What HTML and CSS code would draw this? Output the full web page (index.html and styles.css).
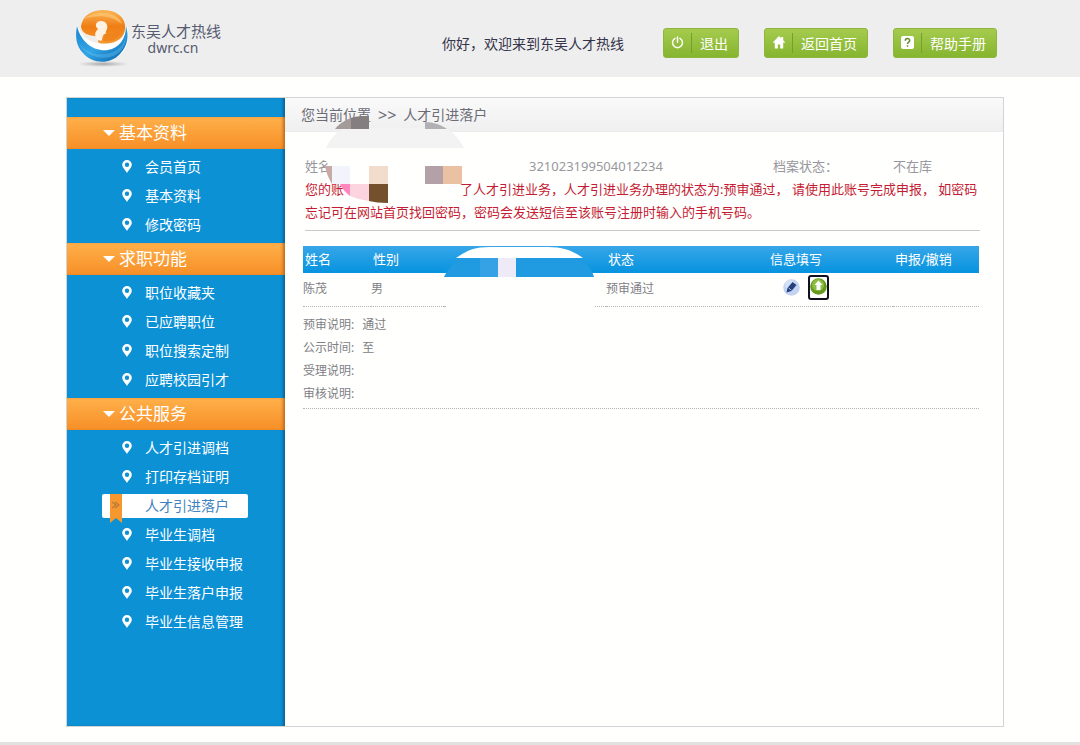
FILE: index.html
```html
<!DOCTYPE html>
<html lang="zh-CN">
<head>
<meta charset="utf-8">
<title>东吴人才热线</title>
<link rel="stylesheet" href="styles.css">
</head>
<body>
<svg class="defs" width="0" height="0" aria-hidden="true">
  <symbol id="pin" viewBox="0 0 10 13">
    <path fill="#fff" fill-rule="evenodd" d="M5 0a4.8 4.8 0 0 1 4.8 4.8C9.800 7.600 6.800 9.700 5 13 3.200 9.700.2 7.600.2 4.800A4.800 4.800 0 0 1 5 0Zm0 2.500a2.200 2.200 0 1 0 0 4.400 2.200 2.200 0 0 0 0-4.400Z"/>
  </symbol>
</svg>

<header class="header">
  <a class="logo" href="#">
    <svg class="logo-mark" width="56" height="58" viewBox="0 0 56 58" aria-hidden="true">
      <defs>
        <linearGradient id="lo" x1="0" y1="0" x2="0" y2="1"><stop offset="0" stop-color="#fbb659"/><stop offset=".5" stop-color="#ef7d14"/><stop offset="1" stop-color="#f59a33"/></linearGradient>
        <linearGradient id="lb" x1="0" y1="0" x2="1" y2="1"><stop offset="0" stop-color="#1d86cf"/><stop offset=".5" stop-color="#31a5e6"/><stop offset="1" stop-color="#0a5fa8"/></linearGradient>
        <radialGradient id="ls"><stop offset="0" stop-color="#888" stop-opacity=".7"/><stop offset="1" stop-color="#999" stop-opacity="0"/></radialGradient>
      </defs>
      <ellipse cx="28" cy="54" rx="26" ry="3" fill="url(#ls)"/>
      <path d="M2 15C0 24 2 32 6 39c9 13 31 16 42 3 6-8 6-17 4-27-1 9-7 17-17 18C20 36 8 30 2 15Z" fill="#fff"/>
      <path d="M2 16C0 26 1 36 8 43c9 11 27 12 37 1 8-8 9-19 6-28 0 13-7 22-18 24C20 42 6 33 2 16Z" fill="url(#lb)"/>
      <path d="M4 33c8 11 22 14 34 9 7-3 11-8 13-16 0 11-7 19-16 21C21 50 8 43 4 33Z" fill="#65c1f0" opacity=".4"/>
      <path d="M6 16C8 5 17 0 28 0c12 0 21 6 22 15 1 9-4 16-14 18-7 1-13 1-13-2 0-2 1-3 2-5C16 27 6 24 6 16Z" fill="url(#lo)"/>
      <path d="M9 9C20-1 43 1 47 14 38 6 23 4 9 9Z" fill="#fdc46f" opacity=".75"/>
      <path d="M22 29c-3-4-2-7 1-10-4-3-2-8 3-8 6 0 8 6 5 10 0 3-2 6-3 9-2 1-4 1-6-1Z" fill="#fff2e3"/>
      <path d="M29 24c9 1 16-4 17-11 3 9-3 17-11 18-4 1-6 0-8-1 0-3 1-4 2-6Z" fill="#f0831c" opacity=".9"/>
    </svg>
    <span class="logo-text"><span>东吴人才热线</span><span class="logo-domain">dwrc.cn</span></span>
  </a>
  <nav class="tools">
    <span class="welcome">你好，欢迎来到东吴人才热线</span>
    <button class="tool" type="button">
      <span class="tool-icon"><svg width="13" height="13" viewBox="0 0 13 13" fill="none" stroke="#fff" stroke-width="1.500" stroke-linecap="round"><path d="M4 2.300a5 5 0 1 0 5 0M6.500 1v5.200"/></svg></span>
      <span class="tool-label">退出</span>
    </button>
    <a class="tool" href="#">
      <span class="tool-icon"><svg width="12" height="13" viewBox="0 0 12 13" fill="#fff"><path d="M6 0l2.200 2.200V1h2v3.200L12 6.200l-.8.900-1-.8V12.500H7.200V8.500H4.800v4H1.800V6.300l-1 .8L0 6.200Z"/></svg></span>
      <span class="tool-label">返回首页</span>
    </a>
    <a class="tool" href="#">
      <span class="tool-icon"><svg width="13" height="13" viewBox="0 0 13 13"><rect width="13" height="13" rx="2" fill="#fff"/><path d="M4.300 4.700C4.300 1.800 8.700 1.800 8.700 4.500 8.700 6.200 6.500 6 6.500 8M6.500 9.300v1.500" fill="none" stroke="#648b26" stroke-width="1.500"/></svg></span>
      <span class="tool-label">帮助手册</span>
    </a>
  </nav>
</header>

<div class="shell">
  <nav class="sidebar">
    <h2 class="group">基本资料</h2>
    <ul class="menu">
      <li><a href="#"><svg class="pin"><use href="#pin"/></svg>会员首页</a></li>
      <li><a href="#"><svg class="pin"><use href="#pin"/></svg>基本资料</a></li>
      <li><a href="#"><svg class="pin"><use href="#pin"/></svg>修改密码</a></li>
    </ul>
    <h2 class="group">求职功能</h2>
    <ul class="menu">
      <li><a href="#"><svg class="pin"><use href="#pin"/></svg>职位收藏夹</a></li>
      <li><a href="#"><svg class="pin"><use href="#pin"/></svg>已应聘职位</a></li>
      <li><a href="#"><svg class="pin"><use href="#pin"/></svg>职位搜索定制</a></li>
      <li><a href="#"><svg class="pin"><use href="#pin"/></svg>应聘校园引才</a></li>
    </ul>
    <h2 class="group">公共服务</h2>
    <ul class="menu">
      <li><a href="#"><svg class="pin"><use href="#pin"/></svg>人才引进调档</a></li>
      <li><a href="#"><svg class="pin"><use href="#pin"/></svg>打印存档证明</a></li>
      <li><a class="active" href="#" aria-current="page"><svg class="ribbon" width="12" height="29" viewBox="0 0 12 29"><path d="M0 0h12v29l-6-5-6 5Z" fill="#f7982f"/><path d="M2 8l4 3-4 3M5 8l4 3-4 3" fill="none" stroke="#b87b3c" stroke-width="1.200"/></svg>人才引进落户</a></li>
      <li><a href="#"><svg class="pin"><use href="#pin"/></svg>毕业生调档</a></li>
      <li><a href="#"><svg class="pin"><use href="#pin"/></svg>毕业生接收申报</a></li>
      <li><a href="#"><svg class="pin"><use href="#pin"/></svg>毕业生落户申报</a></li>
      <li><a href="#"><svg class="pin"><use href="#pin"/></svg>毕业生信息管理</a></li>
    </ul>
  </nav>

  <main class="content">
    <div class="crumbs"><span>您当前位置</span><span class="sep">&gt;&gt;</span><span>人才引进落户</span></div>
    <section class="summary">
      <div class="facts"><span>姓名</span><span>321023199504012234</span><span>档案状态：</span><span>不在库</span></div>
      <p class="notice">您的账<span class="blank"></span>了人才引进业务，人才引进业务办理的状态为:预审通过， 请使用此账号完成申报， 如密码<br>忘记可在网站首页找回密码，密码会发送短信至该账号注册时输入的手机号码。</p>
      <svg class="mosaic" width="142" height="88" viewBox="324 116 142 88" aria-hidden="true">
        <path d="M326 148C330 139 337 131 345 128H446C455 134 460 140 464 148Z" fill="#f3f3f4"/>
        <path d="M324 158H460V199H389C365 203 343 196 341 184Z" fill="#fffffd"/>
        <path d="M335 129C341 122 346 120 351 118V129Z" fill="#a39b9a"/>
        <path d="M351 129V118C357 116 363 116 369 116V129Z" fill="#857e81"/>
        <path d="M425 122C434 122 441 125 447 129H425Z" fill="#b1b0b5"/>
        <path d="M325 166H332V184C329 179 326 173 325 166Z" fill="#c9a9a5"/>
        <path d="M332 166h18v18h-18Z" fill="#f2f4fb"/>
        <path d="M369 166h19v18h-19Z" fill="#f2dccb"/>
        <path d="M425 166h18v18h-18Z" fill="#b4a1a8"/>
        <path d="M443 166h19v18h-19Z" fill="#eac2a3"/>
        <path d="M340 184h10v12C346 193 342 189 340 184Z" fill="#ff87bd"/>
        <path d="M350 184h19v17C362 200 355 198 350 196Z" fill="#fbd4df"/>
        <path d="M369 184h19v19C380 203 374 202 369 201Z" fill="#74512c"/>
      </svg>
    </section>

    <section class="records">
      <table class="grid">
        <thead>
          <tr><th class="c-name">姓名</th><th class="c-sex">性别</th><th class="c-id"></th><th class="c-state">状态</th><th class="c-info">信息填写</th><th>申报/撤销</th></tr>
        </thead>
        <tbody>
          <tr>
            <td>陈茂</td><td>男</td><td></td><td>预审通过</td>
            <td><span class="actions">
              <button class="act" type="button" aria-label="编辑"><svg width="17" height="17" viewBox="0 0 17 17"><circle cx="8.500" cy="8.500" r="8.300" fill="#c3d3f1"/><circle cx="7" cy="6" r="5" fill="#dce6f8" opacity=".7"/><path d="M3.500 13.500l1-4.500 5-6 4 3-5 6Z" fill="#253f7d"/><path d="M5.500 9l3 2.300" stroke="#a9bde5"/></svg></button>
              <button class="act focus" type="button" aria-label="申报"><svg width="17" height="17" viewBox="0 0 17 17"><circle cx="8.500" cy="8.500" r="8.300" fill="#65991f"/><circle cx="8" cy="7" r="6" fill="#8dbd43"/><path d="M8.500 2.500l4 4.500H10.500v5h-4V7H4.500Z" fill="#fff"/></svg></button>
            </span></td><td></td>
          </tr>
        </tbody>
      </table>
      <svg class="mosaic-table" width="150" height="61" viewBox="444 247 150 61" aria-hidden="true">
        <path d="M444 273H594V308H446Z" fill="#fffffd"/>
        <path d="M444 277C448 268 457 258 470 250H566C580 255 591 266 594 277Z" fill="#209ae1"/>
        <path d="M456 258C466 251 474 247 490 247H548C562 247 574 251 583 258Z" fill="#fffffd"/>
        <path d="M480 258h18v19h-18Z" fill="#35a2e5"/>
        <path d="M498 258h18v19h-18Z" fill="#efeaf7"/>
      </svg>
      <dl class="details">
        <div><dt>预审说明:</dt><dd>通过</dd></div>
        <div><dt>公示时间:</dt><dd>至</dd></div>
        <div><dt>受理说明:</dt><dd></dd></div>
        <div><dt>审核说明:</dt><dd></dd></div>
      </dl>
    </section>
  </main>
</div>
<footer class="footer"></footer>
</body>
</html>
```
FILE: styles.css
```css
* {
  box-sizing: border-box;
}

body {
  margin: 0;
  min-height: 100vh;
  display: flex;
  flex-direction: column;
  background: #fffffd;
  color: #808086;
  font: 400 14px/20px "Noto Sans", "Noto Sans CJK SC", sans-serif;
}

a {
  color: inherit;
  text-decoration: none;
}

.defs {
  position: absolute;
}

.header {
  display: flex;
  align-items: center;
  justify-content: space-between;
  height: 77px;
  padding: 0 83px 0 75px;
  background: #eee;
}

.logo {
  display: flex;
  color: #565b70;
}

.logo-mark {
  display: block;
}

.logo-text {
  display: flex;
  flex-direction: column;
  align-items: center;
  padding-top: 11px;
  font-size: 15px;
  line-height: 20px;
}

.logo-domain {
  padding-right: 6px;
  font-size: 14px;
  line-height: 14px;
}

.tools {
  display: flex;
  align-items: center;
  gap: 25px;
  padding-top: 9px;
}

.welcome {
  margin-right: 14px;
  padding-top: 1px;
  color: #34344a;
}

.tool {
  display: flex;
  align-items: center;
  height: 30px;
  padding: 0;
  border: 1px solid #8db53f;
  border-radius: 3px;
  background: linear-gradient(#a5cb4e, #86b52f);
  color: #fff;
  font: inherit;
}

.tool-icon {
  display: flex;
  align-items: center;
  justify-content: center;
  width: 28px;
  height: 20px;
  padding-bottom: 1px;
  border-right: 1px solid #75a02a;
}

.tool-label {
  padding: 2px 10px 0 8px;
}

.shell {
  display: flex;
  flex: 1;
  margin: 20px 76px 15px 66px;
  border: 1px solid #d4d4d8;
}

.sidebar {
  flex: 0 0 218px;
  padding-top: 19px;
  background: #0d91d5;
  box-shadow: inset -3px 0 3px -1px #0a6195;
}

.group {
  display: flex;
  align-items: center;
  gap: 4px;
  height: 32px;
  margin: 0;
  padding-left: 36px;
  background: linear-gradient(#ffb04a, #f78f27);
  box-shadow: inset -3px 0 3px -1px #c06c20;
  color: #fff;
  font-size: 17px;
  font-weight: 400;
}

.group::before {
  content: "";
  border: 6px solid transparent;
  border-top-color: #fff;
  border-bottom: 0;
}

.menu {
  margin: 0;
  padding: 3px 37px 4px 35px;
  list-style: none;
}

.menu li {
  display: flex;
  align-items: center;
  height: 29px;
}

.menu a {
  position: relative;
  display: flex;
  align-items: center;
  flex: 1;
  gap: 13px;
  height: 24px;
  padding-left: 20px;
  border-radius: 2px;
  color: #fff;
}

.pin {
  width: 10px;
  height: 13px;
}

.menu .active {
  padding-left: 43px;
  background: #fff;
  color: #3f83c0;
}

.ribbon {
  position: absolute;
  left: 8px;
  top: 0;
}

.content {
  position: relative;
  flex: 1;
  min-width: 0;
}

.crumbs {
  display: flex;
  align-items: center;
  gap: 7px;
  height: 34px;
  padding: 0 16px;
  border-bottom: 1px solid #ececee;
  background: linear-gradient(#fafafa, #efeff0);
  color: #6c6c76;
}

.sep {
  font-size: 16px;
}

.summary {
  margin: 23px 23px 0 20px;
  border-bottom: 1px solid #c9c9c9;
  padding-bottom: 6px;
  font-size: 13px;
  line-height: 23px;
}

.facts {
  display: grid;
  grid-template-columns: 224px 244px 120px 1fr;
  color: #97979d;
}

.notice {
  margin: 0;
  color: #c41c34;
  white-space: nowrap;
}

.blank {
  display: inline-block;
  width: 116px;
}

.mosaic {
  position: absolute;
  left: 39px;
  top: 18px;
}

.records {
  position: relative;
  margin: 15px 24px 0 18px;
  font-size: 12px;
}

.grid {
  width: 100%;
  border-collapse: collapse;
  table-layout: fixed;
}

.grid thead {
  background: linear-gradient(#37a6e8, #0693df);
}

.grid th {
  height: 27px;
  padding: 0 2px 2px;
  color: #fff;
  font-size: 13px;
  font-weight: 400;
  text-align: left;
}

.grid td {
  height: 33px;
  padding: 0;
  border-bottom: 1px dotted #b5b5b5;
}

.c-name {
  width: 68px;
}

.c-sex {
  width: 73px;
}

.c-id,
.c-state {
  width: 162px;
}

.c-info {
  width: 125px;
}

.actions {
  display: flex;
  align-items: center;
  gap: 6px;
  padding: 0 0 4px 13px;
}

.act {
  display: flex;
  padding: 0;
  border: 2px solid transparent;
  border-radius: 3px;
  background: none;
}

.act.focus {
  padding: 1px 0 3px;
  border-color: #101020;
}

.mosaic-table {
  position: absolute;
  left: 141px;
  top: 1px;
}

.details {
  margin: 0;
  padding: 6px 0 3px;
  border-bottom: 1px dotted #b5b5b5;
  line-height: 23px;
}

.details div {
  display: flex;
  gap: 8px;
}

.details dt,
.details dd {
  margin: 0;
}

.footer {
  height: 3px;
  background: #e2e2e2;
}
```
